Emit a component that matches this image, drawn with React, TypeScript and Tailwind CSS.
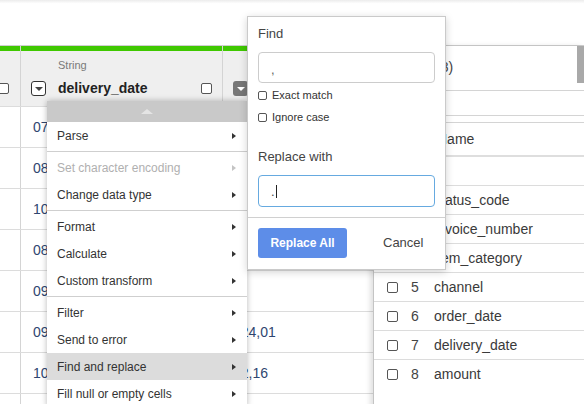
import React from 'react';

type MenuItem = { label: string; disabled?: boolean; active?: boolean } | 'sep';

const menuItems: MenuItem[] = [
  { label: 'Parse' },
  'sep',
  { label: 'Set character encoding', disabled: true },
  { label: 'Change data type' },
  'sep',
  { label: 'Format' },
  { label: 'Calculate' },
  { label: 'Custom transform' },
  'sep',
  { label: 'Filter' },
  { label: 'Send to error' },
  { label: 'Find and replace', active: true },
  { label: 'Fill null or empty cells' },
];

const gridRows = [
  ['07.01.2021', '1875,40'],
  ['08.01.2021', '920,00'],
  ['10.01.2021', '315,75'],
  ['08.01.2021', '2460,10'],
  ['09.01.2021', ''],
  ['09.01.2021', '124,01'],
  ['10.01.2021', '12,16'],
  ['11.01.2021', '88,30'],
];

const columns = [
  ['1', 'id'],
  ['2', 'status_code'],
  ['3', 'invoice_number'],
  ['4', 'item_category'],
  ['5', 'channel'],
  ['6', 'order_date'],
  ['7', 'delivery_date'],
  ['8', 'amount'],
];

function Box({ className = '' }: { className?: string }) {
  return <span className={`block shrink-0 bg-white border border-[#555] rounded-[2px] ${className}`} />;
}

function Grid() {
  return (
    <div className="w-[373px] shrink-0">
      <div className="flex h-[5px]">
        <div className="w-[21px] border-r border-[#d4d4d4] bg-[#3fc800]" />
        <div className="w-[202px] border-r border-[#d4d4d4] bg-[#3fc800]" />
        <div className="flex-1 bg-[#3fc800]" />
      </div>
      <div className="flex h-[56px] border-b border-[#dcdcdc] bg-[#efefef]">
        <div className="w-[21px] border-r border-[#d4d4d4] pt-[32px]">
          <Box className="w-[11px] h-[11px] -ml-[2px] border-[#3a4660]" />
        </div>
        <div className="w-[202px] border-r border-[#d4d4d4] pt-[7px]">
          <div className="pl-[37px] text-[11px] leading-[14px] text-[#7a7a7a]">String</div>
          <div className="mt-[9px] h-[15px] flex items-center pl-[10px] pr-[10px]">
            <span className="w-[15px] h-[15px] rounded-[3px] border border-[#333] bg-white flex items-center justify-center">
              <span className="block w-0 h-0 border-x-[4px] border-x-transparent border-t-[4px] border-t-[#444] mt-[1px]" />
            </span>
            <span className="ml-[12px] text-[14px] font-bold text-[#222]">delivery_date</span>
            <span className="flex-1" />
            <Box className="w-[11px] h-[11px] border-[#333]" />
          </div>
        </div>
        <div className="flex-1 pt-[30px] pl-[10px]">
          <span className="w-[15px] h-[15px] rounded-[3px] bg-[#777] flex items-center justify-center">
            <span className="block w-0 h-0 border-x-[4px] border-x-transparent border-t-[4px] border-t-white mt-[1px]" />
          </span>
        </div>
      </div>
      {gridRows.map(([d, v], i) => (
        <div key={i} className="flex h-[41px] border-b border-[#dcdcdc] text-[14px] text-[#2f4670]">
          <div className="w-[21px] border-r border-[#d4d4d4]" />
          <div className="w-[202px] border-r border-[#d4d4d4] pl-[12px] flex items-center">{d}</div>
          <div className="flex-1 pl-[10px] flex items-center">{v}</div>
        </div>
      ))}
    </div>
  );
}

function ColumnsPanel() {
  return (
    <div className="flex-1 border-l border-[#c4c4c4] bg-white shadow-[-3px_0_5px_rgba(0,0,0,0.12)] text-[14px] text-[#3a3a3a]">
      <div className="h-[45px] border-b border-[#d4d4d4] flex">
        <span className="pl-[3px] pt-[11px] text-[14px] text-[#444]">Columns (8)</span>
        <span className="flex-1" />
        <span className="w-[7px] h-[37px] bg-[#a9a9a9]" />
      </div>
      <div className="h-[25px] border-b border-[#d4d4d4]" />
      <div className="h-[7px] border-b border-[#d4d4d4]" />
      <div className="h-[34px] border-b-2 border-[#dedede] flex items-center pl-[13px]">
        <span className="w-[11px]" />
        <span className="ml-[13px] w-[23px]">#</span>
        <span className="pl-[3px]">Name</span>
      </div>
      {columns.map(([n, name], i) => (
        <div key={n} className={`h-[29px] flex items-center pl-[13px] ${i < columns.length - 1 ? 'border-b border-[#dcdcdc]' : ''}`}>
          <Box className="w-[11px] h-[11px] border-[#555]" />
          <span className="ml-[13px] w-[23px] text-[#444]">{n}</span>
          <span>{name}</span>
        </div>
      ))}
    </div>
  );
}

function ColumnMenu() {
  return (
    <div className="absolute left-[47px] top-[101px] w-[200px] bg-white shadow-[0_0_6px_rgba(0,0,0,0.28)] text-[12px] text-[#333]">
      <div className="h-[21px] bg-[#c9c9c9] flex items-center justify-center">
        <span className="block w-0 h-0 border-x-[6px] border-x-transparent border-b-[5px] border-b-[#e4e4e4]" />
      </div>
      {menuItems.map((it, i) =>
        it === 'sep' ? (
          <div key={i} className="py-[2px]">
            <div className="border-t border-[#cfcfcf]" />
          </div>
        ) : (
          <div
            key={i}
            className={`h-[27px] flex items-center justify-between pl-[10px] pr-[11px] ${it.active ? 'bg-[#dcdcdc]' : ''} ${it.disabled ? 'text-[#b0b0b0]' : ''}`}
          >
            <span>{it.label}</span>
            <span
              className={`block w-0 h-0 border-y-[3.5px] border-y-transparent border-l-[4px] ${it.disabled ? 'border-l-[#c4c4c4]' : 'border-l-[#333]'}`}
            />
          </div>
        )
      )}
    </div>
  );
}

function CheckRow({ label }: { label: string }) {
  return (
    <div className="h-[14px] flex items-center text-[11px] text-[#333]">
      <span className="block w-[9px] h-[9px] border border-[#555] rounded-[2px] bg-white" />
      <span className="ml-[5px]">{label}</span>
    </div>
  );
}

function FindReplaceDialog() {
  return (
    <div className="absolute left-[247px] top-[16px] w-[199px] h-[254px] bg-white border border-[#cacaca] shadow-[0_2px_8px_rgba(0,0,0,0.18)] text-[#444]">
      <div className="px-[10px] pt-[9px] flex flex-col">
        <div className="text-[13px] leading-[16px]">Find</div>
        <div className="mt-[10px] h-[31px] rounded-[4px] border border-[#cccccc] flex items-center px-[12px] text-[13px] text-[#666]">
          <span className="mt-[4px]">,</span>
        </div>
        <div className="mt-[5px]">
          <CheckRow label="Exact match" />
        </div>
        <div className="mt-[8px]">
          <CheckRow label="Ignore case" />
        </div>
        <div className="mt-[25px] text-[13px] leading-[16px]">Replace with</div>
        <div className="mt-[10px] h-[32px] rounded-[4px] border border-[#66aae0] flex items-center px-[12px] text-[13px] text-[#444]">
          <span className="mt-[2px]">.</span>
          <span className="block w-px h-[13px] bg-[#222] ml-px" />
        </div>
      </div>
      <div className="mt-[10px] border-t border-[#d0d0d0]" />
      <div className="px-[10px] pt-[10px] flex items-center">
        <button className="w-[89px] h-[30px] rounded-[3px] bg-[#5d8de8] text-white text-[12px] font-bold">Replace All</button>
        <span className="ml-[36px] text-[13px] text-[#444]">Cancel</span>
      </div>
    </div>
  );
}

export default function App() {
  return (
    <div className="relative w-[584px] h-[404px] overflow-hidden bg-white font-['Liberation_Sans',Arial,sans-serif]">
      <div className="h-[45px] bg-linear-to-b from-[#ececec] via-white via-[8%] to-white" />
      <div className="flex border-t border-[#cfcfcf]">
        <Grid />
        <ColumnsPanel />
      </div>
      <ColumnMenu />
      <FindReplaceDialog />
    </div>
  );
}
